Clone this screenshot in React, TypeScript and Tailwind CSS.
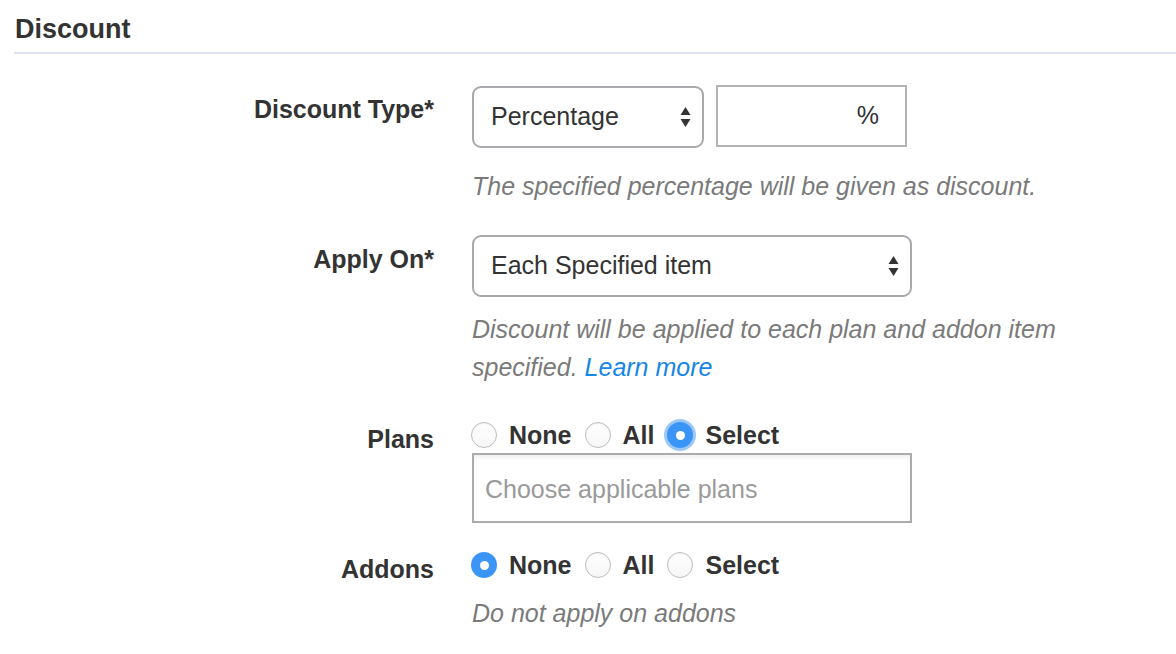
import React from 'react';

const font = { fontFamily: '"Liberation Sans", Arial, sans-serif' };

const SelectArrows = () => (
  <svg width="11" height="22" viewBox="0 0 11 22" className="shrink-0">
    <path d="M5.5 1 L10.5 9 L0.5 9 Z" fill="#333" />
    <path d="M0.5 13 L10.5 13 L5.5 21 Z" fill="#333" />
  </svg>
);

const FakeSelect = ({ value, width }: { value: string; width: string }) => (
  <div
    className={`${width} h-[62px] flex items-center justify-between pl-[17px] pr-[11px] border-2 border-[#a9a9ad] rounded-[9px] bg-white text-[25px] text-[#333]`}
  >
    <span>{value}</span>
    <SelectArrows />
  </div>
);

const Radio = ({ checked, focused }: { checked?: boolean; focused?: boolean }) =>
  checked ? (
    <span
      className={`w-[26px] h-[26px] rounded-full bg-[#3b95f7] flex items-center justify-center shrink-0 ${
        focused ? 'ring-[3px] ring-[#9cc8f8]' : ''
      }`}
    >
      <span className="w-[9px] h-[9px] rounded-full bg-white" />
    </span>
  ) : (
    <span className="w-[26px] h-[26px] rounded-full border border-[#bdbdbd] bg-gradient-to-b from-white to-[#f6f6f6] shadow-[inset_0_1px_1px_rgba(0,0,0,0.06)] shrink-0" />
  );

const RadioGroup = ({ selected, focused }: { selected: string; focused?: boolean }) => (
  <div className="flex items-center h-[30px] font-bold text-[25px] text-[#333]">
    {['None', 'All', 'Select'].map((opt, i) => (
      <label key={opt} className={`flex items-center ${i > 0 ? 'ml-[13px]' : '-ml-[1px]'}`}>
        <Radio checked={selected === opt} focused={focused && selected === opt} />
        <span className="ml-[12px] leading-[30px]">{opt}</span>
      </label>
    ))}
  </div>
);

const Row = ({ label, labelPad, children }: { label: string; labelPad: string; children: React.ReactNode }) => (
  <div className="flex">
    <div className={`w-[434px] shrink-0 text-right font-bold text-[25px] leading-[30px] text-[#333] ${labelPad}`}>
      {label}
    </div>
    <div className="ml-[38px] flex flex-col">{children}</div>
  </div>
);

const Help = ({ children, className = '' }: { children: React.ReactNode; className?: string }) => (
  <p className={`italic text-[25px] leading-[38px] text-[#7a7a7a] ${className}`}>{children}</p>
);

export default function App() {
  return (
    <div className="min-h-screen w-[1176px] bg-white" style={font}>
      <div className="ml-[14px] pl-[1px] pt-[13px] pb-[7px] border-b-2 border-[#dde2ec]">
        <h2 className="text-[27px] leading-[32px] font-bold text-[#333]">Discount</h2>
      </div>

      <div className="mt-[32px]">
        <Row label="Discount Type*" labelPad="pt-[8px]">
          <div className="flex gap-[12px]">
            <FakeSelect value="Percentage" width="w-[232px]" />
            <div className="w-[191px] h-[62px] border-2 border-[#b3b3b3] flex items-center justify-end pr-[26px] text-[25px] text-[#333] -mt-[1px]">
              %
            </div>
          </div>
          <Help className="mt-[19px]">The specified percentage will be given as discount.</Help>
        </Row>
      </div>

      <div className="mt-[30px]">
        <Row label="Apply On*" labelPad="pt-[9px]">
          <FakeSelect value="Each Specified item" width="w-[440px]" />
          <Help className="mt-[13px] w-[620px]">
            Discount will be applied to each plan and addon item specified.{' '}
            <a className="text-[#1786e8]">Learn more</a>
          </Help>
        </Row>
      </div>

      <div className="mt-[34px]">
        <Row label="Plans" labelPad="pt-[4px]">
          <RadioGroup selected="Select" focused />
          <div className="mt-[3px] w-[440px] h-[70px] border-2 border-[#ababab] shadow-[inset_0_3px_4px_rgba(0,0,0,0.06)] flex items-center pl-[11px] pt-[3px] text-[25px] text-[#9a9a9a]">
            Choose applicable plans
          </div>
        </Row>
      </div>

      <div className="mt-[27px]">
        <Row label="Addons" labelPad="pt-[4px]">
          <RadioGroup selected="None" />
          <Help className="mt-[14px]">Do not apply on addons</Help>
        </Row>
      </div>
    </div>
  );
}
